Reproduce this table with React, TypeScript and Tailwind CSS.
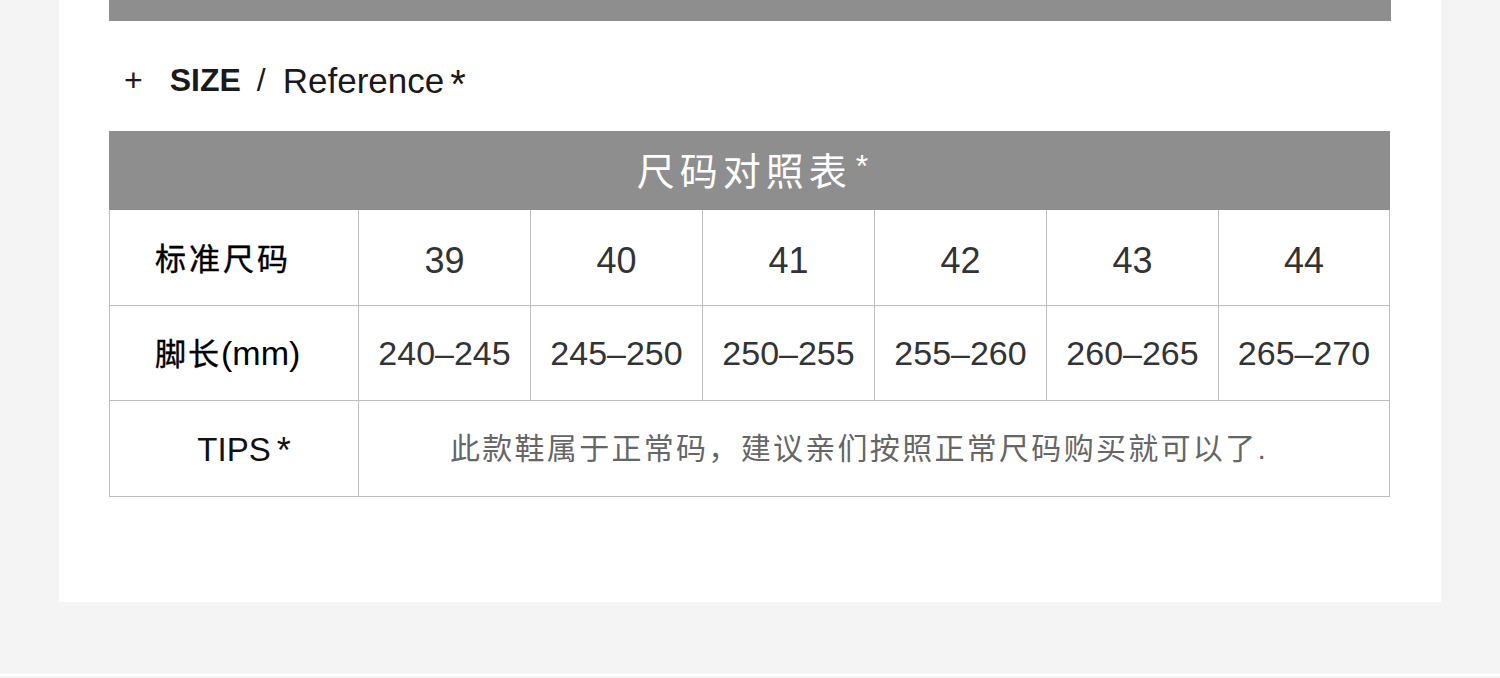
import React from "react";

const sizes = ["39", "40", "41", "42", "43", "44"];
const lengths = ["240–245", "245–250", "250–255", "255–260", "260–265", "265–270"];

export default function App() {
  const cell = "border border-[#bdbdbd] text-center align-middle p-0";
  return (
    <div className="min-h-screen bg-[#f4f4f4] font-['Liberation_Sans','Noto_Sans_CJK_SC',sans-serif]">
      <div className="ml-[59px] w-[1382px] h-[602px] bg-white px-[50px]">
        <div className="h-[21px] bg-[#8e8e8e]" />
        <div className="h-[110px] flex items-center pl-[15px] pt-[8px] text-[#1a1a1a] leading-none">
          <span className="text-[32px] font-light">+</span>
          <span className="ml-[27px] text-[32px] font-bold">SIZE</span>
          <span className="ml-[16px] text-[32px]">/</span>
          <span className="ml-[17px] text-[35px]">Reference</span>
          <span className="ml-[6px] text-[40px] self-start mt-[35px]">*</span>
        </div>
        <table className="w-[1280px] table-fixed border-collapse">
          <colgroup>
            <col className="w-[249px]" />
            <col className="w-[172px]" />
            <col className="w-[172px]" />
            <col className="w-[172px]" />
            <col className="w-[172px]" />
            <col className="w-[172px]" />
            <col className="w-[171px]" />
          </colgroup>
          <tbody>
            <tr className="h-[78px]">
              <td colSpan={7} className="bg-[#8e8e8e] text-center align-middle pt-[6px] pl-[6px] border border-[#8e8e8e]">
                <span className="text-white text-[38px] tracking-[5px] leading-none">尺码对照表</span>
                <span className="text-white text-[32px] relative top-[-8px] ml-[4px]">*</span>
              </td>
            </tr>
            <tr className="h-[96px]">
              <td className="border border-[#bdbdbd] align-middle text-left pl-[45px] pt-[6px] text-[31px] tracking-[3px] text-black [-webkit-text-stroke:0.4px_black]">
                标准尺码
              </td>
              {sizes.map((s) => (
                <td key={s} className={`${cell} pt-[7px] text-[36px] text-[#333]`}>{s}</td>
              ))}
            </tr>
            <tr className="h-[95px]">
              <td className="border border-[#bdbdbd] align-middle text-left pl-[45px] text-black">
                <span className="text-[31px] tracking-[2px] [-webkit-text-stroke:0.4px_black]">脚长</span>
                <span className="text-[34px]">(mm)</span>
              </td>
              {lengths.map((s) => (
                <td key={s} className={`${cell} text-[34px] text-[#333]`}>{s}</td>
              ))}
            </tr>
            <tr className="h-[96px]">
              <td className={`${cell} text-[33px] text-[#111]`}>
                <span className="ml-[20px]">TIPS</span>
                <span className="ml-[6px] text-[36px] relative top-[2px]">*</span>
              </td>
              <td colSpan={6} className={`${cell} pr-[30px] text-[30px] tracking-[2.3px] text-[#666]`}>
                此款鞋属于正常码，建议亲们按照正常尺码购买就可以了.
              </td>
            </tr>
          </tbody>
        </table>
      </div>
      <div className="h-[74px]" />
      <div className="h-[2px] bg-white -mt-[2px] relative" />
    </div>
  );
}
